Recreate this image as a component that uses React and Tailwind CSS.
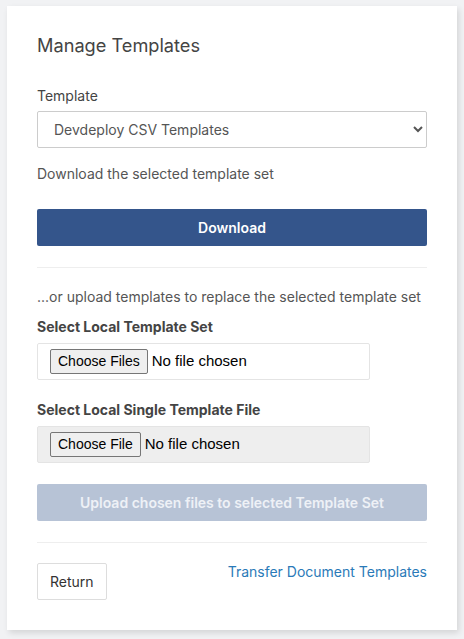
export default function App() {
  return (
    <div className="min-h-screen bg-[#f1f2f4] pt-[6px] pl-[7px] pr-[7px] pb-[9px] font-['Inter',sans-serif] text-[#555]">
      <div className="bg-white shadow-[2px_3px_6px_rgba(0,0,0,0.12)] px-[30px] pt-[28px] pb-[30px]">
        <h2 className="text-[18.2px] text-[#444] leading-[22px]">Manage Templates</h2>

        <label className="block mt-[30px] text-[14px] leading-[20px] text-[#444]">Template</label>
        <select className="mt-[5px] w-full h-[37px] border border-[#ccc] rounded-[2px] pl-[12px] pr-[6px] text-[14px] text-[#555] bg-white">
          <option>Devdeploy CSV Templates</option>
        </select>

        <p className="mt-[16px] text-[14px] leading-[20px]">Download the selected template set</p>

        <button className="mt-[25px] w-full h-[37px] rounded-[2px] bg-[#34558b] text-white font-semibold text-[14px]">
          Download
        </button>

        <hr className="mt-[21px] border-t border-[#eee]" />

        <p className="mt-[19px] text-[14px] leading-[20px]">...or upload templates to replace the selected template set</p>

        <label className="block mt-[10px] text-[14px] font-bold leading-[20px] text-[#444]">Select Local Template Set</label>
        <div className="mt-[6px] w-[333px] h-[37px] border border-[#e4e4e4] rounded-[2px] bg-white flex items-center pl-[12px]">
          <input
            type="file"
            multiple
            className="text-[15px] font-['Liberation_Sans',Arial,sans-serif] text-black file:text-[14px] file:mr-[4px] file:px-[7px] file:py-[1px] file:border file:border-[#767676] file:rounded-[2px] file:bg-[#efefef] file:text-black"
          />
        </div>

        <label className="block mt-[20px] text-[14px] font-bold leading-[20px] text-[#444]">Select Local Single Template File</label>
        <div className="mt-[6px] w-[333px] h-[37px] border border-[#e4e4e4] rounded-[2px] bg-[#eee] flex items-center pl-[12px]">
          <input
            type="file"
            className="text-[15px] font-['Liberation_Sans',Arial,sans-serif] text-black file:text-[14px] file:mr-[4px] file:px-[7px] file:py-[1px] file:border file:border-[#767676] file:rounded-[2px] file:bg-[#efefef] file:text-black"
          />
        </div>

        <button
          disabled
          className="mt-[21px] w-full h-[37px] rounded-[2px] bg-[#b7c3d6] text-[#eef1f6] font-semibold text-[14px]"
        >
          Upload chosen files to selected Template Set
        </button>

        <hr className="mt-[21px] border-t border-[#eee]" />

        <div className="mt-[20px] flex justify-between items-start">
          <button className="h-[37px] px-[12px] border border-[#ddd] rounded-[2px] bg-white text-[14px] text-[#333]">
            Return
          </button>
          <a href="#" className="mt-[-1px] text-[14px] leading-[20px] text-[#2a7ab8]">
            Transfer Document Templates
          </a>
        </div>
      </div>
    </div>
  );
}
